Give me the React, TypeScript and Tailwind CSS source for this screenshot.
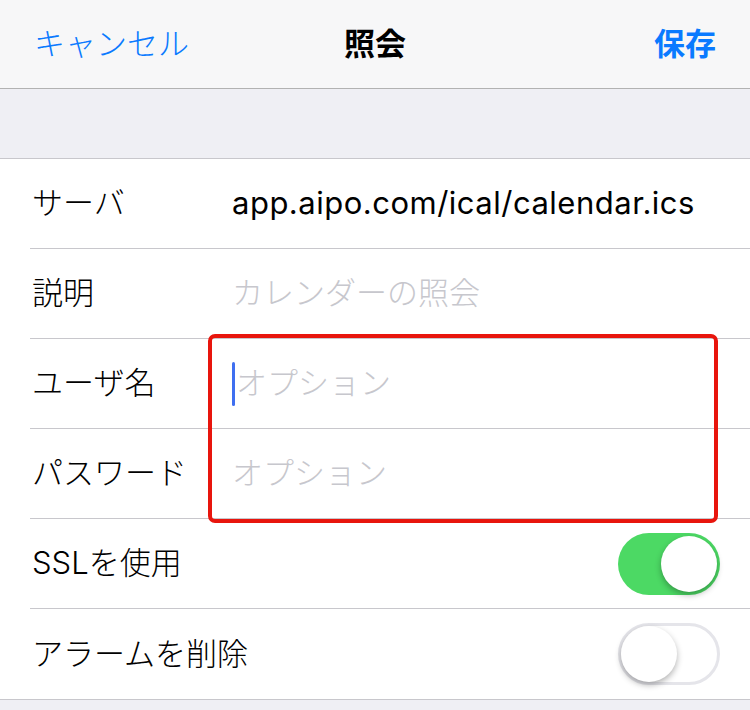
import React from 'react'

const font = { fontFamily: '"Inter", "Noto Sans CJK JP", sans-serif' }

function Toggle({ on }: { on: boolean }) {
    return (
        <div
            className={`relative w-[102px] h-[62px] rounded-full ${
                on ? 'bg-[#4cd964]' : 'bg-white border-[3px] border-[#e5e5ea]'
            }`}
        >
            <div
                className={`absolute w-[56px] h-[56px] rounded-full bg-white shadow-[0_3px_6px_rgba(0,0,0,0.3)] ${
                    on ? 'right-[3px] top-[3px]' : 'left-[0px] top-[0px]'
                }`}
            ></div>
        </div>
    )
}

function Row({ label, children, last }: { label: string; children?: React.ReactNode; last?: boolean }) {
    return (
        <div className="h-[90px] pl-[30px]">
            <div className={`h-full flex items-center pr-[30px] ${last ? '' : 'border-b border-[#c8c7cc]'}`}>
                <div className="w-[202px] pl-[2px] text-[31px] font-light text-black shrink-0 whitespace-nowrap">{label}</div>
                <div className="flex-1 flex items-center text-[31px] font-light whitespace-nowrap">{children}</div>
            </div>
        </div>
    )
}

export default function App() {
    return (
        <div className="w-[750px] h-[710px] bg-[#efeff4] overflow-hidden relative" style={font}>
            {/* Nav bar */}
            <div className="h-[89px] bg-[#f7f7f8] border-b border-[#b2b2b2] grid grid-cols-3 items-center px-[34px]">
                <span className="text-[31px] font-light text-[#0a7aff]">キャンセル</span>
                <span className="text-[31px] font-bold text-black text-center">照会</span>
                <span className="text-[31px] font-bold text-[#0a7aff] text-right">保存</span>
            </div>

            <div className="h-[69px]"></div>

            <div className="bg-white border-t border-b border-[#c8c7cc]">
                <Row label="サーバ">
                    <span className="text-black font-normal tracking-[0.5px]">app.aipo.com/ical/calendar.ics</span>
                </Row>
                <Row label="説明">
                    <span className="text-[#c7c7cd]">カレンダーの照会</span>
                </Row>
                <Row label="ユーザ名">
                    <span className="w-[3px] h-[44px] rounded-full bg-[#3f6ff0] mr-[1px]"></span>
                    <span className="text-[#c7c7cd]">オプション</span>
                </Row>
                <Row label="パスワード">
                    <span className="text-[#c7c7cd]">オプション</span>
                </Row>
                <Row label="SSLを使用">
                    <div className="flex-1 flex justify-end">
                        <Toggle on />
                    </div>
                </Row>
                <Row label="アラームを削除" last>
                    <div className="flex-1 flex justify-end">
                        <Toggle on={false} />
                    </div>
                </Row>
            </div>

            {/* Highlight box */}
            <div className="absolute left-[208px] top-[334px] w-[510px] h-[189px] border-[4px] border-[#e8150d] rounded-[7px]"></div>
        </div>
    )
}
